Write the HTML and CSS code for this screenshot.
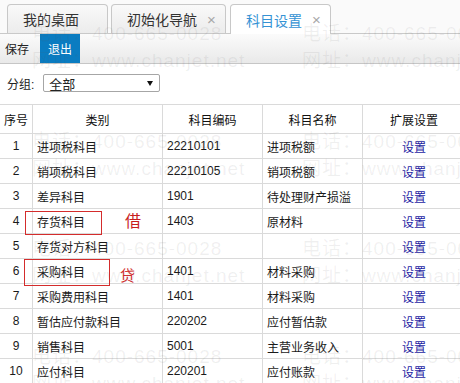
FILE: index.html
```html
<!DOCTYPE html>
<html lang="zh-CN">
<head>
<meta charset="utf-8">
<title>科目设置</title>
<link rel="stylesheet" href="styles.css">
</head>
<body>
<div class="page">
  <div class="tabbar">
    <div class="tab tab-home">我的桌面</div>
    <div class="tab">初始化导航<span class="close">×</span></div>
    <div class="tab active">科目设置<span class="close">×</span></div>
  </div>
  <div class="toolbar">
    <span class="tool">保存</span>
    <span class="tool primary">退出</span>
  </div>
  <div class="filter">
    <span class="filter-label">分组:</span>
    <div class="select"><span class="select-text">全部</span><i class="caret"></i></div>
  </div>
  <table class="grid">
    <colgroup>
      <col class="c-no"><col class="c-type"><col class="c-code"><col class="c-name"><col class="c-ext">
    </colgroup>
    <thead>
      <tr><th>序号</th><th>类别</th><th>科目编码</th><th>科目名称</th><th>扩展设置</th></tr>
    </thead>
    <tbody>
      <tr><td class="no">1</td><td>进项税科目</td><td>22210101</td><td>进项税额</td><td class="ext"><a>设置</a></td></tr>
      <tr><td class="no">2</td><td>销项税科目</td><td>22210105</td><td>销项税额</td><td class="ext"><a>设置</a></td></tr>
      <tr><td class="no">3</td><td>差异科目</td><td>1901</td><td>待处理财产损溢</td><td class="ext"><a>设置</a></td></tr>
      <tr><td class="no">4</td><td>存货科目</td><td>1403</td><td>原材料</td><td class="ext"><a>设置</a></td></tr>
      <tr><td class="no">5</td><td>存货对方科目</td><td></td><td></td><td class="ext"><a>设置</a></td></tr>
      <tr><td class="no">6</td><td>采购科目</td><td>1401</td><td>材料采购</td><td class="ext"><a>设置</a></td></tr>
      <tr><td class="no">7</td><td>采购费用科目</td><td>1401</td><td>材料采购</td><td class="ext"><a>设置</a></td></tr>
      <tr><td class="no">8</td><td>暂估应付款科目</td><td>220202</td><td>应付暂估款</td><td class="ext"><a>设置</a></td></tr>
      <tr><td class="no">9</td><td>销售科目</td><td>5001</td><td>主营业务收入</td><td class="ext"><a>设置</a></td></tr>
      <tr><td class="no">10</td><td>应付科目</td><td>220201</td><td>应付账款</td><td class="ext"><a>设置</a></td></tr>
    </tbody>
  </table>

  <div class="mark mark-debit"></div>
  <span class="mark-text text-debit">借</span>
  <div class="mark mark-credit"></div>
  <span class="mark-text text-credit">贷</span>

  <div class="watermark" aria-hidden="true">
    <div class="wm"><div>电话：400-665-0028</div><div>网址：www.chanjet.net</div></div>
    <div class="wm"><div>电话：400-665-0028</div><div>网址：www.chanjet.net</div></div>
    <div class="wm"><div>电话：400-665-0028</div><div>网址：www.chanjet.net</div></div>
    <div class="wm"><div>电话：400-665-0028</div><div>网址：www.chanjet.net</div></div>
    <div class="wm"><div>电话：400-665-0028</div><div>网址：www.chanjet.net</div></div>
    <div class="wm"><div>电话：400-665-0028</div><div>网址：www.chanjet.net</div></div>
    <div class="wm"><div>电话：400-665-0028</div><div>网址：www.chanjet.net</div></div>
    <div class="wm"><div>电话：400-665-0028</div><div>网址：www.chanjet.net</div></div>
  </div>
</div>
</body>
</html>
```
FILE: styles.css
```css
html, body {
  margin: 0;
  padding: 0;
  background: #fff;
  overflow: hidden;
}
body {
  font-family: "Liberation Sans", "Noto Sans CJK SC", sans-serif;
  font-size: 12px;
  color: #222;
}
.page {
  position: relative;
  width: 460px;
  height: 383px;
  overflow: hidden;
}

/* tabs */
.tabbar {
  box-sizing: border-box;
  height: 34px;
  display: flex;
  align-items: flex-end;
  gap: 3px;
  padding-left: 7px;
  background: #fafafa;
  border-bottom: 1px solid #c9c9c9;
}
.tab {
  box-sizing: border-box;
  height: 29px;
  display: flex;
  align-items: center;
  padding: 0 9px 0 15px;
  border: 1px solid #c8c8c8;
  border-bottom: none;
  border-radius: 4px 4px 0 0;
  background: linear-gradient(#f9f9f9, #ececec);
  font-size: 14px;
  color: #333;
  white-space: nowrap;
}
.tab-home {
  padding-right: 28px;
}
.tab.active {
  height: 30px;
  margin-bottom: -1px;
  margin-left: 1px;
  background: #fff;
  color: #3592d4;
}
.close {
  margin-left: 10px;
  width: 9px;
  color: #a8a8a8;
  font-size: 15px;
}

/* toolbar */
.toolbar {
  box-sizing: border-box;
  height: 30px;
  display: flex;
  align-items: stretch;
  gap: 6px;
  background: linear-gradient(#fbfbfb, #e9e9e9);
  border-bottom: 1px solid #c6c6c6;
}
.tool {
  display: flex;
  align-items: center;
  padding: 0 5px;
  color: #222;
}
.tool.primary {
  padding: 0 8px;
  background: #0a7cc1;
  color: #fff;
}

/* filter */
.filter {
  display: flex;
  align-items: center;
  gap: 9px;
  padding: 10px 0 0 7px;
  height: 18px;
}
.select {
  box-sizing: border-box;
  width: 117px;
  height: 18px;
  display: flex;
  align-items: center;
  justify-content: space-between;
  padding: 0 6px 0 5px;
  border: 1px solid #a6a6a6;
  border-radius: 2px;
  background: #fff;
  font-size: 13px;
}
.caret {
  width: 0;
  height: 0;
  border-left: 3px solid transparent;
  border-right: 3px solid transparent;
  border-top: 5px solid #111;
}

/* table */
.grid {
  margin: 12px 0 0 -1px;
  border-collapse: collapse;
  table-layout: fixed;
  width: 466px;
}
.c-no { width: 33px; }
.c-type { width: 130px; }
.c-code { width: 100px; }
.c-name { width: 100px; }
.c-ext { width: 103px; }
.grid th,
.grid td {
  border: 1px solid #dadada;
  padding: 0 4px;
  white-space: nowrap;
  overflow: hidden;
  text-align: left;
  font-weight: normal;
}
.grid th {
  height: 28px;
  text-align: center;
  color: #111;
}
.grid td {
  height: 24px;
  color: #1a1a1a;
}
.grid td.no,
.grid td.ext {
  text-align: center;
}
.grid a {
  color: #1d1da3;
  text-decoration: none;
}

/* annotations */
.mark {
  position: absolute;
  box-sizing: border-box;
  border: 1px solid #d42c2c;
}
.mark-debit {
  left: 25px;
  top: 211px;
  width: 77px;
  height: 24px;
}
.mark-credit {
  left: 24px;
  top: 259px;
  width: 86px;
  height: 27px;
}
.mark-text {
  position: absolute;
  font-family: "Noto Sans CJK SC", sans-serif;
  line-height: 1;
  color: #c81e1e;
}
.text-debit {
  left: 125px;
  top: 212px;
  font-size: 16px;
}
.text-credit {
  left: 120px;
  top: 267px;
  font-size: 15px;
  color: #d23030;
}

/* watermark */
.watermark {
  position: absolute;
  left: 32px;
  top: 20px;
  display: grid;
  grid-template-columns: repeat(2, 270px);
  grid-auto-rows: 107.5px;
  pointer-events: none;
  font-family: "Liberation Sans", "Noto Sans CJK SC", sans-serif;
  font-size: 19px;
  line-height: 27px;
  letter-spacing: 1px;
  color: rgba(90, 90, 90, 0.09);
  white-space: nowrap;
}
```
